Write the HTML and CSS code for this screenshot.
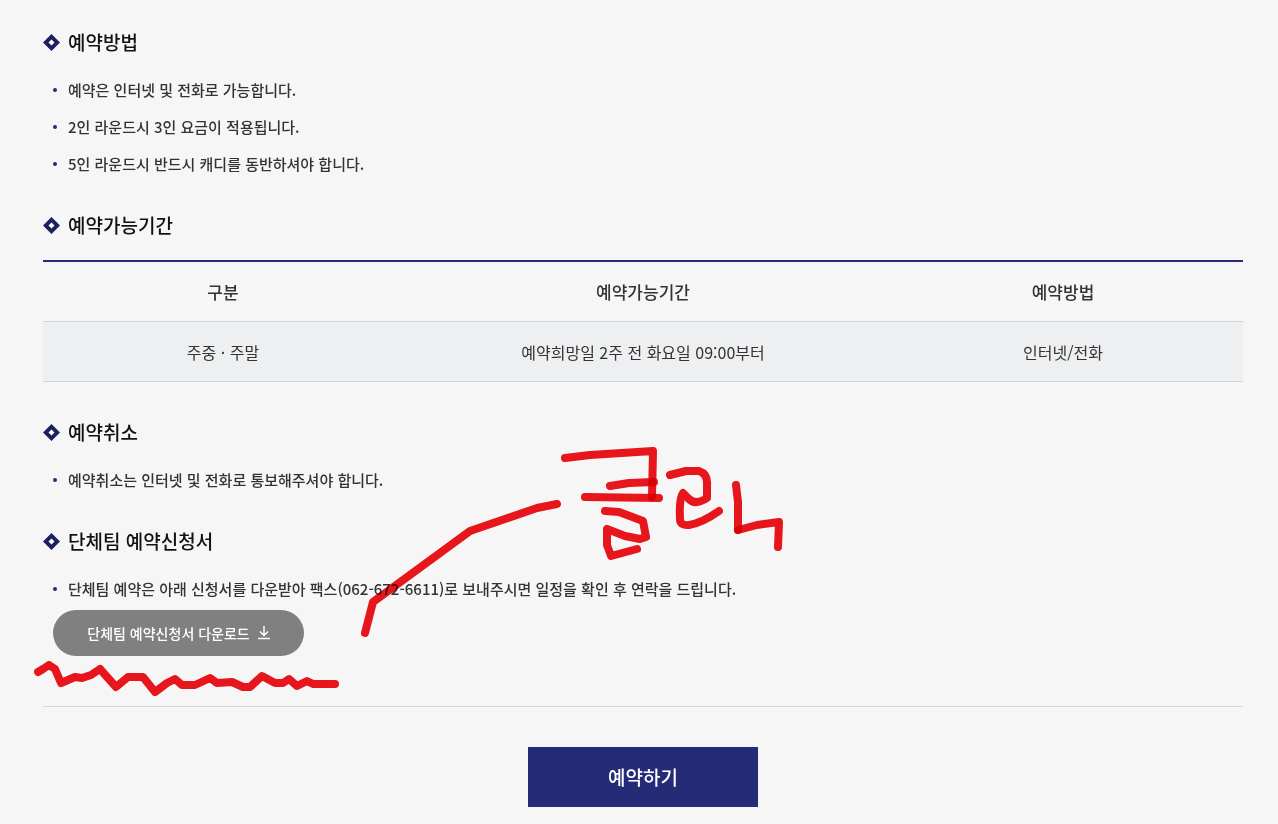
FILE: index.html
```
<!DOCTYPE html>
<html lang="ko">
<head>
  <meta charset="UTF-8">
  <meta name="viewport" content="width=device-width, initial-scale=1">
  <title>예약안내</title>
  <link rel="stylesheet" href="styles.css">
</head>
<body>

<main class="container">
  <section class="section">
    <h2 class="title"><svg class="diamond" viewBox="0 0 17 17" aria-hidden="true"><path class="diamond-outer" d="M8.500 0 17 8.500 8.500 17 0 8.500z"/><path class="diamond-inner" d="M8.500 5.500 11.500 8.500 8.500 11.500 5.500 8.500z"/></svg>예약방법</h2>
    <ul class="list">
      <li>예약은 인터넷 및 전화로 가능합니다.</li>
      <li>2인 라운드시 3인 요금이 적용됩니다.</li>
      <li>5인 라운드시 반드시 캐디를 동반하셔야 합니다.</li>
    </ul>
  </section>

  <section class="section section-table">
    <h2 class="title"><svg class="diamond" viewBox="0 0 17 17" aria-hidden="true"><path class="diamond-outer" d="M8.500 0 17 8.500 8.500 17 0 8.500z"/><path class="diamond-inner" d="M8.500 5.500 11.500 8.500 8.500 11.500 5.500 8.500z"/></svg>예약가능기간</h2>
    <table class="table">
      <thead>
        <tr>
          <th class="col-side" scope="col">구분</th>
          <th scope="col">예약가능기간</th>
          <th class="col-side" scope="col">예약방법</th>
        </tr>
      </thead>
      <tbody>
        <tr>
          <td>주중 · 주말</td>
          <td>예약희망일 2주 전 화요일 09:00부터</td>
          <td>인터넷/전화</td>
        </tr>
      </tbody>
    </table>
  </section>

  <section class="section">
    <h2 class="title"><svg class="diamond" viewBox="0 0 17 17" aria-hidden="true"><path class="diamond-outer" d="M8.500 0 17 8.500 8.500 17 0 8.500z"/><path class="diamond-inner" d="M8.500 5.500 11.500 8.500 8.500 11.500 5.500 8.500z"/></svg>예약취소</h2>
    <ul class="list">
      <li>예약취소는 인터넷 및 전화로 통보해주셔야 합니다.</li>
    </ul>
  </section>

  <section class="section section-form">
    <h2 class="title"><svg class="diamond" viewBox="0 0 17 17" aria-hidden="true"><path class="diamond-outer" d="M8.500 0 17 8.500 8.500 17 0 8.500z"/><path class="diamond-inner" d="M8.500 5.500 11.500 8.500 8.500 11.500 5.500 8.500z"/></svg>단체팀 예약신청서</h2>
    <ul class="list">
      <li>단체팀 예약은 아래 신청서를 다운받아 팩스(062-672-6611)로 보내주시면 일정을 확인 후 연락을 드립니다.</li>
    </ul>
    <a class="download" href="#">단체팀 예약신청서 다운로드
      <svg class="download-icon" viewBox="0 0 12 14" aria-hidden="true"><path d="M6 0v9M2 5.500 6 9.500 10 5.500M0 12.500h12"/></svg>
    </a>
  </section>

  <div class="actions">
    <a class="reserve" href="#">예약하기</a>
  </div>
</main>

<!-- hand-drawn marks over the page -->
<svg class="marks" width="820" height="720" viewBox="0 0 820 720" role="img" aria-label="클릭">
  <path d="M365 633 373 602 470 531 537 508 557 504"/>
  <path d="M565 458 590 455 653 451 652 497"/>
  <path d="M610 486 629 483 654 482"/>
  <path d="M585 497 659 498"/>
  <path d="M605 511 619 512 643 521 646 537 640 539 625 536 607 529 607 545 611 556 637 549"/>
  <path d="M670 475 686 471H699Q708 474 707 485V498Q695 506 688 498L683 493Q679 499 680 519 680 526 689 525 702 523 719 511"/>
  <path d="M736 485 738 502V530"/>
  <path d="M738 530 757 525 779 522 778 547"/>
  <path d="M38 672 43 669 49 665 55 669 61 683 75 677 82 678 91 675 100 669 116 687 128 677H143L155 692 167 683 175 679 182 685H195L210 678 217 683 232 682 243 687H250L262 676 275 683H283L289 679 297 686 307 681 313 684H335"/>
</svg>

</body>
</html>
```
FILE: styles.css
```
* {
  box-sizing: border-box;
}

body {
  margin: 0;
  background: #f6f6f6;
  color: #333;
  font-family: "Noto Sans CJK KR", "Noto Sans", sans-serif;
  font-size: 15px;
  font-weight: 500;
}

a {
  text-decoration: none;
}

.container {
  padding: 27px 35px 17px 43px;
}

.section {
  margin-bottom: 28px;
}

.section-table {
  margin-bottom: 35px;
}

.section-form {
  margin-bottom: 0;
  padding-bottom: 50px;
  border-bottom: 1px solid #d5d5d5;
}

.title {
  display: flex;
  align-items: center;
  gap: 8px;
  margin: 0 0 14px;
  color: #111;
  font-size: 19px;
  font-weight: 500;
  line-height: 30px;
}

.section-table .title {
  margin-bottom: 20px;
}

.diamond {
  width: 17px;
  height: 17px;
}

.diamond-outer { fill: #1c2060; }
.diamond-inner { fill: #fff; }

.list {
  margin: 0;
  padding: 0 0 0 10px;
  list-style: none;
}

.list li {
  display: flex;
  align-items: center;
  gap: 11px;
  line-height: 37px;
}

.list li::before {
  content: "";
  flex: none;
  width: 4px;
  height: 4px;
  border-radius: 50%;
  background: #252b77;
}

.table {
  width: 100%;
  table-layout: fixed;
  border-spacing: 0;
  border-top: 2px solid #252b77;
  text-align: center;
}

.table th,
.table td {
  height: 60px;
  padding: 0;
  border-bottom: 1px solid #d0d3d7;
}

.table th {
  font-size: 17px;
  font-weight: 500;
}

.table td {
  background: #eeeff1;
  font-size: 16px;
  font-weight: 400;
}

.col-side {
  width: 30%;
}

.download {
  display: flex;
  align-items: center;
  justify-content: center;
  gap: 8px;
  width: 251px;
  height: 46px;
  margin: 3px 0 0 10px;
  border-radius: 23px;
  background: #808080;
  color: #fff;
  font-size: 14px;
}

.download-icon {
  width: 12px;
  height: 14px;
  fill: none;
  stroke: #fff;
  stroke-width: 1.5;
}

.actions {
  display: flex;
  justify-content: center;
  padding-top: 40px;
}

.reserve {
  width: 230px;
  background: #252b77;
  color: #fff;
  font-size: 19px;
  line-height: 60px;
  text-align: center;
}

.marks {
  position: absolute;
  top: 0;
  left: 0;
  fill: none;
  stroke: #ef161d;
  stroke-width: 8;
  stroke-linecap: round;
  stroke-linejoin: round;
  mix-blend-mode: multiply;
  pointer-events: none;
}

.marks path {
  mix-blend-mode: multiply;
}
```
